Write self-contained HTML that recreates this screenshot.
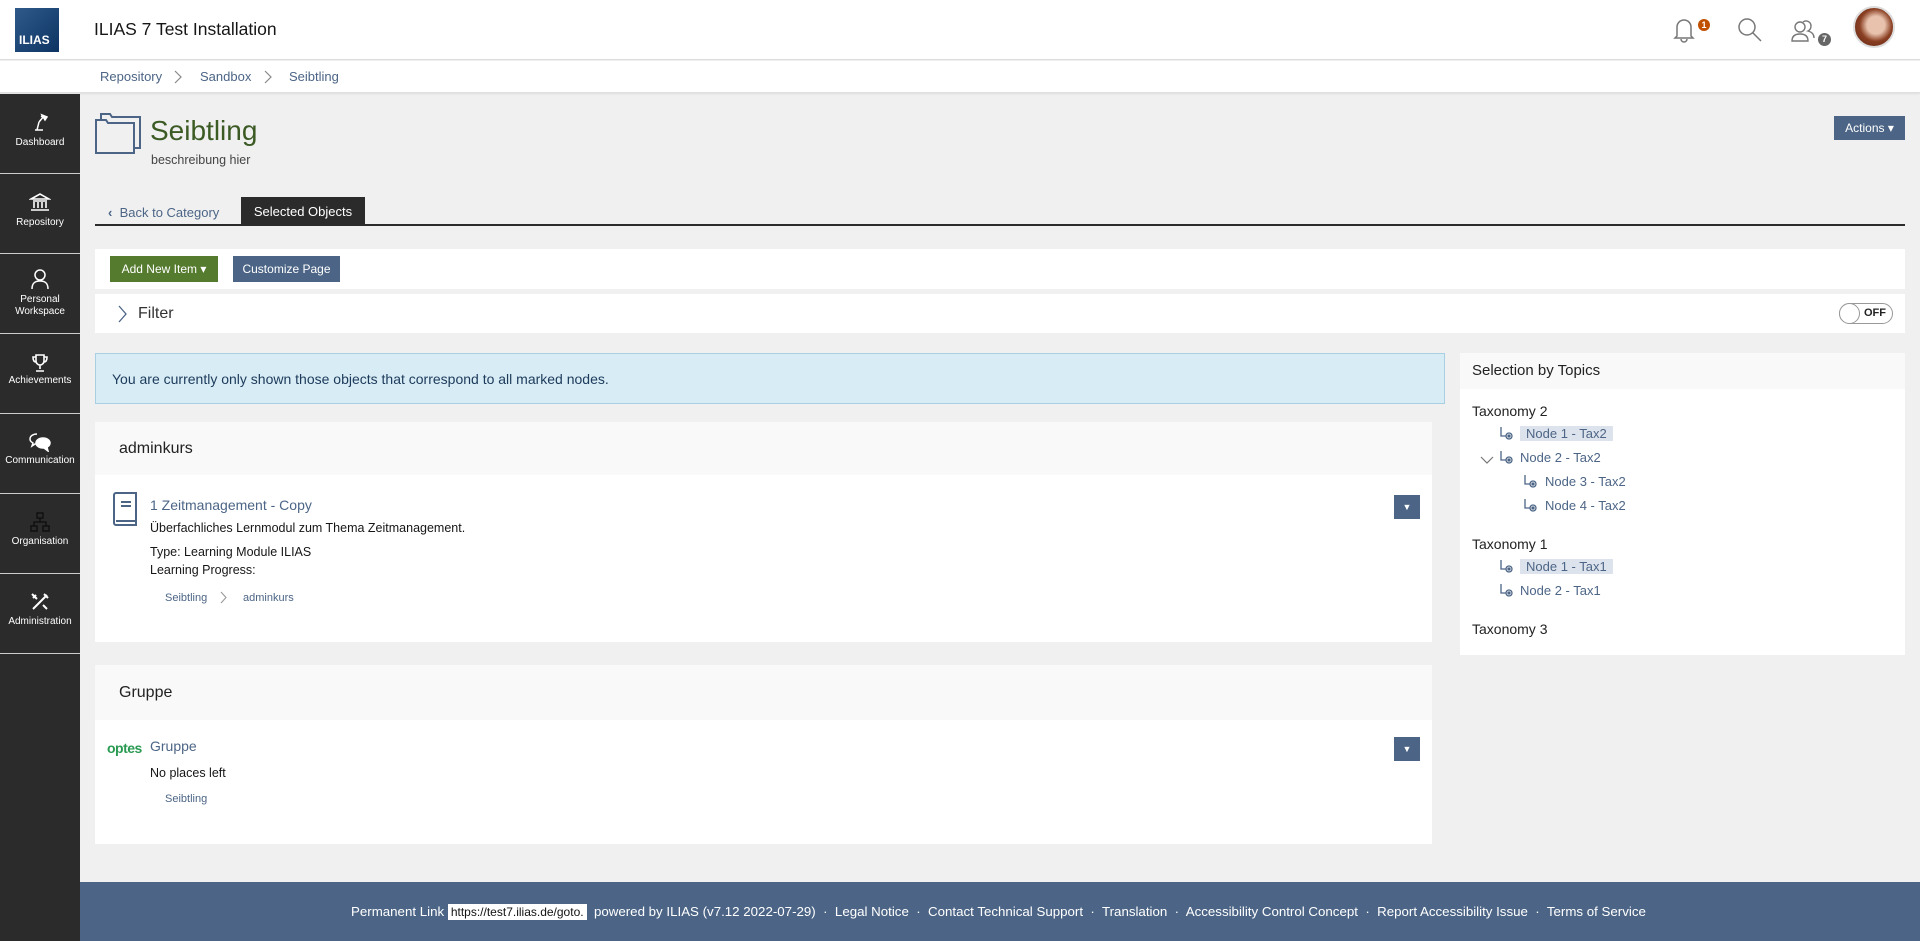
<!DOCTYPE html>
<html><head><meta charset="utf-8"><style>
*{box-sizing:border-box;margin:0;padding:0}
body{width:1920px;height:941px;overflow:hidden;background:#f0f0f0;font-family:"Liberation Sans",sans-serif;color:#161616;position:relative;font-size:13px}
.abs{position:absolute}
#hdr{left:0;top:0;width:1920px;height:60px;background:#fff;border-bottom:1px solid #ddd}
#bc{left:0;top:61px;width:1920px;height:32px;background:#fff;border-bottom:1px solid #e0e0e0;box-shadow:0 1px 2px rgba(0,0,0,.08)}
#bc span{position:absolute;top:8px;font-size:13px;color:#4c6586}
#side{left:0;top:94px;width:80px;height:847px;background:#2b2b2b}
.si{position:absolute;left:0;width:80px;height:80px;border-bottom:1px solid #ccc;color:#fff;font-size:10px;text-align:center;line-height:12px}
.si svg{display:block;margin:0 auto}
.panel{background:#fff}
.btn{position:absolute;color:#fff;font-size:12px;line-height:26px;text-align:center}
.lnk{color:#4c6586}
#foot{left:80px;top:882px;width:1840px;height:59px;background:#4c6586;color:#fff;font-size:13.3px}
.tn{position:absolute;font-size:13px;color:#4c6586}
.tic{position:absolute;width:16px;height:16px}
</style></head><body>
<div id="hdr" class="abs">
 <div class="abs" style="left:15px;top:8px;width:44px;height:44px;background:linear-gradient(135deg,#2e5a8a,#0d3463)"><span class="abs" style="left:4px;bottom:5px;color:#fff;font-weight:bold;font-size:12px">ILIAS</span></div>
 <div class="abs" style="left:94px;top:19px;font-size:17.5px;color:#161616">ILIAS 7 Test Installation</div>
 <svg class="abs" style="left:1672px;top:17px" width="24" height="26" viewBox="0 0 24 26" fill="none" stroke="#777" stroke-width="1.5"><path d="M5 19V10a7 7 0 0 1 14 0v9l2 2H3z"/><path d="M9 22a3 3 0 0 0 6 0"/></svg>
 <div class="abs" style="left:1698px;top:19px;width:12px;height:12px;border-radius:6px;background:#c04f00;color:#fff;font-size:9px;font-weight:bold;text-align:center;line-height:12px">1</div>
 <svg class="abs" style="left:1737px;top:17px" width="26" height="26" viewBox="0 0 26 26" fill="none" stroke="#777" stroke-width="1.5"><circle cx="10" cy="10" r="8"/><path d="M16 16l8 8"/></svg>
 <svg class="abs" style="left:1790px;top:16px" width="28" height="28" viewBox="0 0 28 28" fill="none" stroke="#777" stroke-width="1.4"><circle cx="10" cy="11" r="5"/><path d="M2 25c0-5 3-7 8-7s8 2 8 7z"/><path d="M13 6a5 5 0 0 1 8 4c0 2-1 4-3 5 4 1 6 3 6 7"/></svg>
 <div class="abs" style="left:1818px;top:33px;width:13px;height:13px;border-radius:7px;background:#666;color:#fff;font-size:9px;font-weight:bold;text-align:center;line-height:13px">7</div>
 <div class="abs" style="left:1853px;top:6px;width:42px;height:42px;border-radius:21px;background:radial-gradient(circle at 55% 45%,#e8c2ad 0 30%,#8a3f22 55%,#5a2314);border:2px solid #ddd"></div>
</div>
<div id="bc" class="abs"><span style="left:100px">Repository</span><span style="left:200px">Sandbox</span><span style="left:289px">Seibtling</span>
<svg class="abs" style="left:174px;top:9px" width="8" height="14" viewBox="0 0 8 14" fill="none" stroke="#888" stroke-width="1.2"><path d="M1 1l6 6-6 6"/></svg>
<svg class="abs" style="left:264px;top:9px" width="8" height="14" viewBox="0 0 8 14" fill="none" stroke="#888" stroke-width="1.2"><path d="M1 1l6 6-6 6"/></svg></div>
<div id="side" class="abs">
 <div class="si" style="top:0"><svg style="margin-top:18px" width="18" height="20" viewBox="0 0 18 20" fill="none" stroke="#fff" stroke-width="1.5"><path d="M4 18h8M6 18l2-8M8 10l5-6M10 4l5 3"/><path d="M11 3l5 2-2 3z" fill="#fff"/></svg><div style="margin-top:5px">Dashboard</div></div>
 <div class="si" style="top:80px"><svg style="margin-top:18px" width="22" height="20" viewBox="0 0 22 20" fill="none" stroke="#fff" stroke-width="1.6"><path d="M2 7L11 2l9 5zM4 9h14M5 10v6M9 10v6M13 10v6M17 10v6M2 18h18"/></svg><div style="margin-top:5px">Repository</div></div>
 <div class="si" style="top:160px"><svg style="margin-top:14px" width="20" height="22" viewBox="0 0 20 22" fill="none" stroke="#fff" stroke-width="1.5"><circle cx="10" cy="7" r="5"/><path d="M2 21c0-6 3-8 8-8s8 2 8 8"/></svg><div style="margin-top:4px">Personal<br>Workspace</div></div>
 <div class="si" style="top:240px"><svg style="margin-top:20px" width="16" height="18" viewBox="0 0 16 18" fill="none" stroke="#fff" stroke-width="1.6"><path d="M4 1h8v6a4 4 0 0 1-8 0zM4 3H1c0 3 1 5 3 5M12 3h3c0 3-1 5-3 5M8 11v4M4 17h8"/></svg><div style="margin-top:3px">Achievements</div></div>
 <div class="si" style="top:320px"><svg style="margin-top:18px" width="22" height="20" viewBox="0 0 22 20" fill="none" stroke="#fff" stroke-width="1.5"><path d="M8 2C4 2 1 4 1 7c0 2 1 3 3 4l-1 3 3-2h2"/><ellipse cx="14" cy="11" rx="7" ry="5" fill="#fff"/><path d="M18 15l1 4-4-3" fill="#fff"/></svg><div style="margin-top:3px">Communication</div></div>
 <div class="si" style="top:400px"><svg style="margin-top:18px" width="20" height="20" viewBox="0 0 20 20" fill="none" stroke="#111" stroke-width="1.5"><rect x="7" y="1" width="6" height="5"/><rect x="1" y="14" width="6" height="5"/><rect x="13" y="14" width="6" height="5"/><path d="M10 6v4M4 14v-4h12v4"/></svg><div style="margin-top:4px">Organisation</div></div>
 <div class="si" style="top:480px"><svg style="margin-top:18px" width="20" height="20" viewBox="0 0 20 20" fill="none" stroke="#fff" stroke-width="2"><path d="M3 17L17 3M14 2l4 4M2 2l5 5M13 13l4 4M3 6l3-3"/></svg><div style="margin-top:4px">Administration</div></div>
</div>

<svg class="abs" style="left:95px;top:112px" width="47" height="42" viewBox="0 0 47 42" fill="none" stroke="#4c6586" stroke-width="2"><path d="M6 7V2h9l2 3h28v31h-6"/><path d="M1 8h10l2 3h26v30H1z"/></svg>
<div class="abs" style="left:150px;top:115px;font-size:28px;color:#3b5a24">Seibtling</div>
<div class="abs" style="left:151px;top:153px;font-size:12.5px;color:#444">beschreibung hier</div>
<div class="btn" style="left:1834px;top:116px;width:71px;height:24px;line-height:24px;background:#4c6586">Actions ▾</div>

<div class="abs" style="left:108px;top:205px;font-size:13px;color:#4c6586"><b>&lsaquo;</b>&nbsp; Back to Category</div>
<div class="abs" style="left:241px;top:197px;width:124px;height:28px;background:#2b2b2b;color:#fff;font-size:13px;line-height:29px;text-align:center">Selected Objects</div>
<div class="abs" style="left:95px;top:224px;width:1810px;height:2px;background:#2b2b2b"></div>

<div class="abs panel" style="left:95px;top:249px;width:1810px;height:40px"></div>
<div class="btn" style="left:110px;top:256px;width:108px;background:#557b2e">Add New Item ▾</div>
<div class="btn" style="left:233px;top:256px;width:107px;background:#4c6586">Customize Page</div>
<div class="abs panel" style="left:95px;top:294px;width:1810px;height:39px"></div>
<svg class="abs" style="left:117px;top:304px" width="10" height="20" viewBox="0 0 10 20" fill="none" stroke="#4c6586" stroke-width="1.3"><path d="M2 2l7 8-7 8"/></svg>
<div class="abs" style="left:138px;top:305px;font-size:16px;color:#333">Filter</div>
<div class="abs" style="left:1839px;top:303px;width:54px;height:21px;border:1px solid #999;border-radius:11px;background:#fff"><div class="abs" style="left:-1px;top:-1px;width:21px;height:21px;border-radius:11px;border:1px solid #999;background:#fff"></div><span class="abs" style="left:24px;top:3px;font-size:11px;font-weight:bold;color:#222">OFF</span></div>

<div class="abs" style="left:95px;top:353px;width:1350px;height:51px;background:#d8ecf5;border:1px solid #a8cfe2"><span class="abs" style="left:16px;top:17px;font-size:14px;color:#1c3a5a">You are currently only shown those objects that correspond to all marked nodes.</span></div>

<div class="abs panel" style="left:95px;top:422px;width:1337px;height:220px"><div style="height:53px;background:#f9f9f9;padding:18px 24px;font-size:16px;color:#222">adminkurs</div></div>
<svg class="abs" style="left:111px;top:491px" width="27" height="36" viewBox="0 0 27 36" fill="none" stroke="#4c6586" stroke-width="2"><path d="M5 2h20v32H5a2 2 0 0 1-2-2V4a2 2 0 0 1 2-2z"/><path d="M5 30h20M10 11h10M10 15h10"/></svg>
<div class="abs lnk" style="left:150px;top:497px;font-size:14px">1 Zeitmanagement - Copy</div>
<div class="abs" style="left:150px;top:521px;font-size:12.5px">Überfachliches Lernmodul zum Thema Zeitmanagement.</div>
<div class="abs" style="left:150px;top:543px;font-size:12.5px;line-height:18px">Type: Learning Module ILIAS<br>Learning Progress:</div>
<div class="abs lnk" style="left:165px;top:592px;font-size:11px">Seibtling</div>
<svg class="abs" style="left:220px;top:591px" width="7" height="13" viewBox="0 0 7 13" fill="none" stroke="#999" stroke-width="1.1"><path d="M1 1l5 5.5-5 5.5"/></svg>
<div class="abs lnk" style="left:243px;top:592px;font-size:11px">adminkurs</div>
<div class="btn" style="left:1394px;top:495px;width:26px;height:24px;line-height:24px;background:#4c6586;font-size:9px">▼</div>

<div class="abs panel" style="left:95px;top:665px;width:1337px;height:179px"><div style="height:55px;background:#f9f9f9;padding:19px 24px;font-size:16px;color:#222">Gruppe</div></div>
<div class="abs" style="left:107px;top:740px;font-size:14px;font-weight:bold;color:#2a9a52;letter-spacing:-.5px">optes</div>
<div class="abs lnk" style="left:150px;top:738px;font-size:14px">Gruppe</div>
<div class="abs" style="left:150px;top:766px;font-size:12.5px">No places left</div>
<div class="abs lnk" style="left:165px;top:793px;font-size:11px">Seibtling</div>
<div class="btn" style="left:1394px;top:737px;width:26px;height:24px;line-height:24px;background:#4c6586;font-size:9px">▼</div>

<div class="abs panel" style="left:1460px;top:353px;width:445px;height:302px"><div style="height:36px;background:#f9f9f9;padding:9px 12px;font-size:15px;color:#222">Selection by Topics</div></div>
<div class="abs" style="left:1472px;top:403px;font-size:14px;color:#222">Taxonomy 2</div>
<div class="abs" style="left:1472px;top:536px;font-size:14px;color:#222">Taxonomy 1</div>
<div class="abs" style="left:1472px;top:621px;font-size:14px;color:#222">Taxonomy 3</div>
<svg width="0" height="0" style="position:absolute"><defs><g id="ti" fill="none" stroke="#4c6586" stroke-width="1.3"><path d="M1 1v9h5"/><circle cx="9" cy="10" r="3"/><circle cx="9" cy="10" r="1" fill="#4c6586"/></g></defs></svg>
<svg class="tic" style="left:1500px;top:426px"><use href="#ti"/></svg>
<div class="tn" style="left:1520px;top:426px;background:#dde3ec;padding:0 6px">Node 1 - Tax2</div>
<svg class="abs" style="left:1480px;top:456px" width="14" height="8" viewBox="0 0 14 8" fill="none" stroke="#777" stroke-width="1.2"><path d="M1 1l6 6 6-6"/></svg>
<svg class="tic" style="left:1500px;top:450px"><use href="#ti"/></svg>
<div class="tn" style="left:1520px;top:450px">Node 2 - Tax2</div>
<svg class="tic" style="left:1524px;top:474px"><use href="#ti"/></svg>
<div class="tn" style="left:1545px;top:474px">Node 3 - Tax2</div>
<svg class="tic" style="left:1524px;top:498px"><use href="#ti"/></svg>
<div class="tn" style="left:1545px;top:498px">Node 4 - Tax2</div>
<svg class="tic" style="left:1500px;top:559px"><use href="#ti"/></svg>
<div class="tn" style="left:1520px;top:559px;background:#dde3ec;padding:0 6px">Node 1 - Tax1</div>
<svg class="tic" style="left:1500px;top:583px"><use href="#ti"/></svg>
<div class="tn" style="left:1520px;top:583px">Node 2 - Tax1</div>

<div id="foot" class="abs"><div class="abs" style="left:271px;top:22px;white-space:nowrap">Permanent Link <span style="background:#fff;color:#111;padding:1px 3px;font-size:12px">https://test7.ilias.de/goto.</span>&nbsp; powered by ILIAS (v7.12 2022-07-29) &nbsp;·&nbsp; Legal Notice &nbsp;·&nbsp; Contact Technical Support &nbsp;·&nbsp; Translation &nbsp;·&nbsp; Accessibility Control Concept &nbsp;·&nbsp; Report Accessibility Issue &nbsp;·&nbsp; Terms of Service</div></div>
</body></html>
